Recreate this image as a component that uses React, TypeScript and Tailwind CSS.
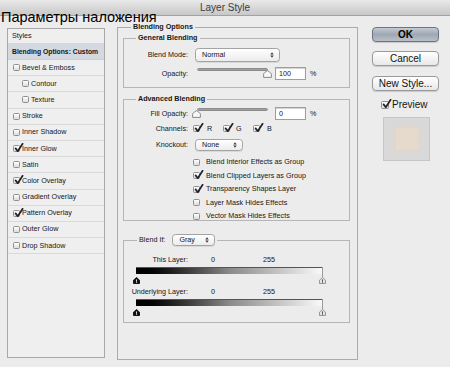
import type { ReactNode } from "react";

const LAYER_STYLES = [
  { label: "Bevel & Emboss", checked: false, indent: false },
  { label: "Contour", checked: false, indent: true },
  { label: "Texture", checked: false, indent: true },
  { label: "Stroke", checked: false, indent: false },
  { label: "Inner Shadow", checked: false, indent: false },
  { label: "Inner Glow", checked: true, indent: false },
  { label: "Satin", checked: false, indent: false },
  { label: "Color Overlay", checked: true, indent: false },
  { label: "Gradient Overlay", checked: false, indent: false },
  { label: "Pattern Overlay", checked: true, indent: false },
  { label: "Outer Glow", checked: false, indent: false },
  { label: "Drop Shadow", checked: false, indent: false },
];

const ADVANCED_OPTIONS = [
  { label: "Blend Interior Effects as Group", checked: false },
  { label: "Blend Clipped Layers as Group", checked: true },
  { label: "Transparency Shapes Layer", checked: true },
  { label: "Layer Mask Hides Effects", checked: false },
  { label: "Vector Mask Hides Effects", checked: false },
];

function CheckMark() {
  return (
    <svg className="absolute -top-[3px] left-[0px] w-[10px] h-[10px]" viewBox="0 0 10 10" fill="none">
      <path d="M1.6 5.4 L3.8 8.2 L8.6 0.8" stroke="#1f2328" strokeWidth={1.7} strokeLinecap="round" strokeLinejoin="round" />
    </svg>
  );
}

function Checkbox({ checked, big }: { checked?: boolean; big?: boolean }) {
  return (
    <span
      className={`relative shrink-0 rounded-[1.5px] border border-[#8f8f8f] bg-gradient-to-b from-white to-[#dcdcdc] ${
        big ? "w-[8px] h-[8px]" : "w-[7px] h-[7px]"
      }`}
    >
      {checked && <CheckMark />}
    </span>
  );
}

function Arrows() {
  return (
    <svg className="w-[4px] h-[6px]" viewBox="0 0 4 6" fill="#3a3a3a">
      <path d="M0.3 2.4 L2 0.2 L3.7 2.4 Z" />
      <path d="M0.3 3.6 L2 5.8 L3.7 3.6 Z" />
    </svg>
  );
}

function Select({ value, className }: { value: string; className: string }) {
  return (
    <div
      className={`flex items-center justify-between pl-[6px] pr-[5px] rounded-[3.5px] border border-[#a3a3a3] bg-gradient-to-b from-white to-[#ececec] shadow-[0_1px_0_rgba(0,0,0,0.08)] ${className}`}
    >
      <span>{value}</span>
      <Arrows />
    </div>
  );
}

function Thumb() {
  return (
    <svg className="w-[9px] h-[8px]" viewBox="0 0 9 8">
      <path d="M0.6 7.4 V4.2 Q0.6 3.4 1.4 2.8 L4.5 0.6 L7.6 2.8 Q8.4 3.4 8.4 4.2 V7.4 Z" fill="#f7f7f7" stroke="#7f7f7f" strokeWidth={0.9} />
    </svg>
  );
}

function Slider({ thumbLeft }: { thumbLeft: string }) {
  return (
    <div className="relative ml-[8px] w-[77px] h-[13px]">
      <div className="absolute left-[1px] top-[1px] w-[71px] h-[3px] rounded-full bg-gradient-to-b from-[#7d7d7d] to-[#c4c4c4] border border-[#8a8a8a]" />
      <div className={`absolute top-[3px] ${thumbLeft}`}>
        <Thumb />
      </div>
    </div>
  );
}

function NumberInput({ value }: { value: string }) {
  return (
    <div className="ml-[2px] w-[31px] h-[13px] border border-[#9d9d9d] bg-white pl-[3px] leading-[11px] shadow-[inset_0_1px_1px_rgba(0,0,0,0.18)]">
      {value}
    </div>
  );
}

function Label({ children }: { children: ReactNode }) {
  return <div className="w-[64px] shrink-0 text-right">{children}</div>;
}

function RangeThumb({ dark, className }: { dark?: boolean; className: string }) {
  return (
    <svg className={`absolute top-[10px] w-[7px] h-[7px] ${className}`} viewBox="0 0 7 7">
      <path
        d="M0.5 6.5 V3.2 L3.5 0.5 L6.5 3.2 V6.5 Z"
        fill={dark ? "#111" : "#e4e4e4"}
        stroke={dark ? "#000" : "#808080"}
        strokeWidth={0.8}
      />
      <rect x={3} y={2.4} width={1} height={2.4} fill={dark ? "#d8d8d8" : "#555"} />
      <rect x={3} y={5.2} width={1} height={0.8} fill={dark ? "#d8d8d8" : "#555"} />
    </svg>
  );
}

function GradientRange() {
  return (
    <div className="relative ml-[12px] w-[187px] h-[17px]">
      <div className="h-[7px] w-full bg-gradient-to-r from-black via-[#8a8a8a] to-[#fbfbfb] border-t border-[#555]" />
      <div className="absolute right-0 top-0 w-px h-[10px] bg-[#9a9a9a]" />
      <RangeThumb dark className="-left-[3px]" />
      <RangeThumb className="left-[183px]" />
    </div>
  );
}

function Button({ children, primary }: { children: ReactNode; primary?: boolean }) {
  return (
    <div
      className={`flex items-center justify-center w-[67px] h-[15px] rounded-[4px] border text-[10px] shadow-[0_1px_1px_rgba(0,0,0,0.15)] ${
        primary
          ? "border-[#6d7480] bg-gradient-to-b from-[#c4cad3] via-[#9ea7b3] to-[#b9c0ca] font-bold text-black"
          : "border-[#9a9a9a] bg-gradient-to-b from-white to-[#e8e8e8] text-[#111]"
      }`}
    >
      {children}
    </div>
  );
}

export default function App() {
  return (
    <div className="relative w-[450px] h-[367px] overflow-hidden bg-[#ececec] text-[7.2px] leading-[8px] text-[#161616] font-['Liberation_Sans',Arial,sans-serif]">
      {/* Title bar */}
      <div className="h-[16px] flex items-center justify-center border-b border-[#a2a2a2] bg-gradient-to-b from-[#e9e9e9] to-[#c8c8c8] text-[10px] text-[#3b3b3b]">
        Layer Style
      </div>

      <div className="flex items-start">
        {/* Styles list */}
        <div className="ml-[7px] mt-[12px] w-[98px] h-[330px] border border-[#a8a8a8] bg-[#efefef]">
          <div className="h-[15px] flex items-center pl-[4px] border-b border-[#d6d6d6]">Styles</div>
          <div className="h-[16px] flex items-center pl-[4px] border-b border-[#c9ced6] bg-[#d4d9e1] font-bold text-[6.8px]">
            Blending Options: Custom
          </div>
          {LAYER_STYLES.map((s) => (
            <div
              key={s.label}
              className={`h-[16.2px] flex items-center gap-[2px] border-b border-[#dadada] ${s.indent ? "pl-[14px]" : "pl-[5px]"}`}
            >
              <Checkbox checked={s.checked} />
              <span>{s.label}</span>
            </div>
          ))}
        </div>

        {/* Blending Options */}
        <fieldset className="ml-[12px] mt-[7px] w-[241px] border border-[#ababab] pb-[36px]">
          <legend className="ml-[13px] px-[2px] font-bold">Blending Options</legend>

          <fieldset className="ml-[5px] mt-[3px] w-[227px] border border-[#b5b5b5] pb-[7px]">
            <legend className="ml-[12px] px-[2px] font-bold">General Blending</legend>
            <div className="mt-[6px] h-[14px] flex items-center">
              <Label>Blend Mode:</Label>
              <Select value="Normal" className="ml-[7px] w-[85px] h-[14px]" />
            </div>
            <div className="mt-[5px] h-[13px] flex items-center">
              <Label>Opacity:</Label>
              <Slider thumbLeft="left-[67px]" />
              <NumberInput value="100" />
              <span className="ml-[4px]">%</span>
            </div>
          </fieldset>

          <fieldset className="ml-[5px] mt-[7px] w-[227px] border border-[#b5b5b5]">
            <legend className="ml-[12px] px-[2px] font-bold">Advanced Blending</legend>
            <div className="mt-[4px] h-[13px] flex items-center">
              <Label>Fill Opacity:</Label>
              <Slider thumbLeft="-left-[4px]" />
              <NumberInput value="0" />
              <span className="ml-[4px]">%</span>
            </div>
            <div className="mt-[4px] h-[9px] flex items-center">
              <Label>Channels:</Label>
              <div className="ml-[5px] flex items-center gap-[7px]">
                <Checkbox checked />
                <span className="w-[16px]">R</span>
              </div>
              <div className="flex items-center gap-[6px]">
                <Checkbox checked />
                <span className="w-[17px]">G</span>
              </div>
              <div className="flex items-center gap-[7px]">
                <Checkbox checked />
                <span>B</span>
              </div>
            </div>
            <div className="mt-[6px] h-[12px] flex items-center">
              <Label>Knockout:</Label>
              <Select value="None" className="ml-[7px] w-[48px] h-[12px]" />
            </div>
            <div className="mt-[7px] ml-[69px] flex flex-col gap-[5.5px]">
              {ADVANCED_OPTIONS.map((o) => (
                <div key={o.label} className="h-[8px] flex items-center gap-[6px]">
                  <Checkbox checked={o.checked} />
                  <span>{o.label}</span>
                </div>
              ))}
            </div>
          </fieldset>

          <fieldset className="ml-[5px] mt-[13px] w-[227px] border border-[#b5b5b5] pb-[6px]">
            <legend className="ml-[13px] px-[2px] flex items-center">
              <span>Blend If:</span>
              <Select value="Gray" className="ml-[7px] w-[43px] h-[12px]" />
            </legend>
            <div className="mt-[10px] h-[8px] flex items-center">
              <Label>This Layer:</Label>
              <span className="ml-[23px] w-[52px]">0</span>
              <span>255</span>
            </div>
            <div className="mt-[3px]">
              <GradientRange />
            </div>
            <div className="mt-[4px] h-[8px] flex items-center">
              <Label>Underlying Layer:</Label>
              <span className="ml-[23px] w-[52px]">0</span>
              <span>255</span>
            </div>
            <div className="mt-[3px]">
              <GradientRange />
            </div>
          </fieldset>
        </fieldset>

        {/* Buttons */}
        <div className="ml-[14px] mt-[11px] flex flex-col">
          <Button primary>OK</Button>
          <div className="mt-[9px]">
            <Button>Cancel</Button>
          </div>
          <div className="mt-[10px]">
            <Button>New Style...</Button>
          </div>
          <div className="mt-[9px] ml-[9px] h-[9px] flex items-center gap-[3px] text-[10px] leading-[10px]">
            <Checkbox checked big />
            <span>Preview</span>
          </div>
          <div className="mt-[8px] ml-[11px] w-[47px] h-[44px] flex items-center justify-center border border-[#c6c6c6] bg-[#d9d9d9]">
            <div className="w-[22px] h-[22px] bg-[#e6dacd] shadow-[0_0_4px_2px_#e2d6ca]" />
          </div>
        </div>
      </div>

      {/* Caption over the screenshot */}
      <div className="absolute left-[1px] top-[10px] text-[14.5px] leading-none text-black">
        Параметры наложения
      </div>
    </div>
  );
}
